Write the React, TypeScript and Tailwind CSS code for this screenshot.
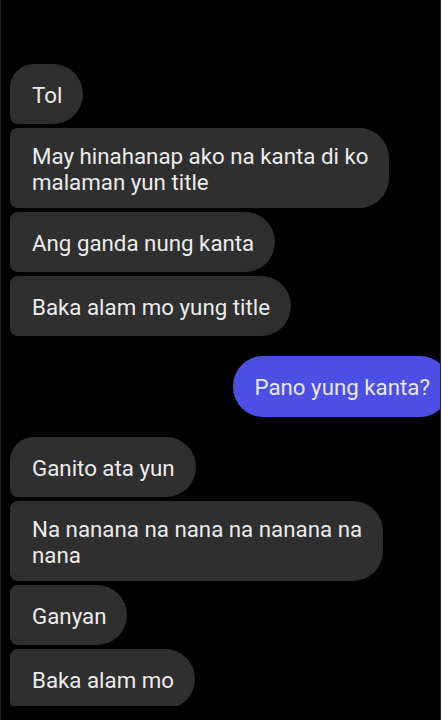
const received = [
  ["Tol"],
  ["May hinahanap ako na kanta di ko", "malaman yun title"],
  ["Ang ganda nung kanta"],
  ["Baka alam mo yung title"],
];

const received2 = [
  ["Ganito ata yun"],
  ["Na nanana na nana na nanana na", "nana"],
  ["Ganyan"],
  ["Baka alam mo"],
];

function Bubble({ lines, first }: { lines: string[]; first: boolean }) {
  return (
    <div className="flex">
      <div
        className={
          (first ? "rounded-tl-[24px]" : "rounded-tl-[8px]") +
          " rounded-bl-[8px] rounded-r-[30px] bg-[#2f2f2f] min-h-[60px] flex items-center pl-[22px] pr-[21px] pt-[15px] pb-[13px] text-[22.3px] leading-[26px] text-[#ececec]"
        }
      >
        <div>
          {lines.map((l, i) => (
            <div key={i} className="whitespace-nowrap">
              {l}
            </div>
          ))}
        </div>
      </div>
    </div>
  );
}

function Group({ msgs }: { msgs: string[][] }) {
  return (
    <div className="flex flex-col gap-[4px]">
      {msgs.map((m, i) => (
        <Bubble key={i} lines={m} first={i === 0} />
      ))}
    </div>
  );
}

export default function App() {
  return (
    <div
      className="h-[720px] w-full bg-black overflow-hidden border-x border-[#262626]"
      style={{ fontFamily: "Roboto, 'Liberation Sans', sans-serif" }}
    >
      <div className="h-[706px] overflow-hidden pt-[64px] pl-[9px]">
        <Group msgs={received} />
        <div className="flex justify-end mt-[20px] -mr-[10px]">
          <div className="rounded-[30px] bg-[#4b4fe3] h-[61px] flex items-center pl-[21px] pr-[20px] text-[22.3px] leading-[26px] text-[#e8e8f2] whitespace-nowrap">
            Pano yung kanta?
          </div>
        </div>
        <div className="mt-[20px]">
          <Group msgs={received2} />
        </div>
      </div>
    </div>
  );
}
